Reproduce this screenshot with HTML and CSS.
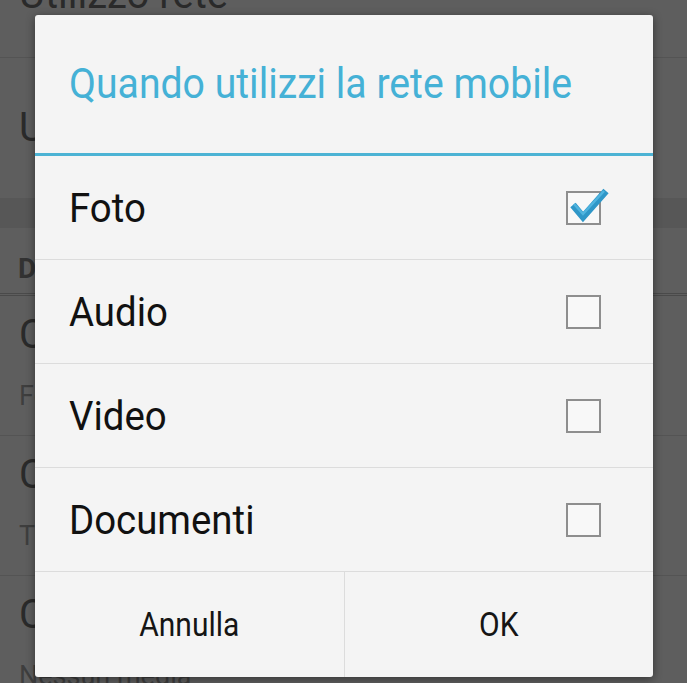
FILE: index.html
```html
<!DOCTYPE html>
<html lang="it">
<head>
<meta charset="utf-8">
<title>Quando utilizzi la rete mobile</title>
<link rel="stylesheet" href="styles.css">
</head>
<body>
<div class="screen">
  <div class="list">
    <div class="pref pref-top"><span class="pref-title">Utilizzo rete</span></div>
    <div class="pref pref-single"><span class="pref-title">Uso dati ridotto</span></div>
    <div class="band"></div>
    <div class="category">DOWNLOAD AUTOMATICO MEDIA</div>
    <div class="pref pref-double">
      <span class="pref-title">Con rete mobile</span>
      <span class="pref-summary">Foto</span>
    </div>
    <div class="pref pref-double">
      <span class="pref-title">Con Wi-Fi</span>
      <span class="pref-summary">Tutti i media</span>
    </div>
    <div class="pref pref-double">
      <span class="pref-title">Con roaming</span>
      <span class="pref-summary">Nessun media</span>
    </div>
  </div>

  <div class="dialog">
    <div class="dialog-title"><span class="tall">Quando utilizzi la rete mobile</span></div>
    <div class="dialog-rule"></div>
    <ul class="options">
      <li class="option"><span class="option-label tall">Foto</span>
        <span class="checkbox checked">
          <svg class="check" width="50" height="44" viewBox="0 0 50 44">
            <polyline points="7,17 17,29 40,3" fill="none" stroke="#2f97c8" stroke-width="7" stroke-linejoin="miter"/>
            <polyline points="8,16 17,26 38,3" fill="none" stroke="#4fb4df" stroke-width="2.5"/>
          </svg>
        </span>
      </li>
      <li class="option"><span class="option-label tall">Audio</span><span class="checkbox"></span></li>
      <li class="option"><span class="option-label tall">Video</span><span class="checkbox"></span></li>
      <li class="option"><span class="option-label tall">Documenti</span><span class="checkbox"></span></li>
    </ul>
    <div class="buttons">
      <div class="btn"><span class="tall">Annulla</span></div>
      <div class="btn"><span class="tall">OK</span></div>
    </div>
  </div>
</div>
</body>
</html>
```

FILE: styles.css
```css
html, body {
  margin: 0;
  padding: 0;
}
body {
  background: #5e5e5e;
  font-family: Roboto, "Noto Sans", "Liberation Sans", sans-serif;
  overflow: hidden;
}
.screen {
  position: relative;
  width: 687px;
  height: 683px;
  overflow: hidden;
  background: #5e5e5e;
}

/* background settings list (dimmed) */
.list {
  display: flex;
  flex-direction: column;
  color: #2a2a2a;
}
.pref {
  box-sizing: border-box;
  padding-left: 19px;
  border-bottom: 1px solid #545454;
  display: flex;
  flex-direction: column;
  justify-content: center;
}
.pref-title {
  font-size: 40px;
  line-height: 1;
  white-space: nowrap;
}
.pref-summary {
  font-size: 27px;
  line-height: 1;
  color: #3e3e3e;
  margin-top: 28px;
  white-space: nowrap;
}
.pref-top {
  height: 58px;
  justify-content: flex-end;
  padding-bottom: 42px;
}
.pref-single {
  height: 140px;
  border-bottom: none;
}
.band {
  height: 30px;
  background: #575757;
}
.category {
  box-sizing: border-box;
  height: 68px;
  padding-left: 18px;
  padding-top: 24px;
  font-size: 28px;
  font-weight: 700;
  color: #323232;
  border-bottom: 3px double #4a4a4a;
  white-space: nowrap;
}
.pref-double {
  height: 140px;
  padding-bottom: 6px;
}

/* dialog */
.dialog {
  position: absolute;
  left: 35px;
  top: 15px;
  width: 618px;
  height: 662px;
  background: #f4f4f4;
  border-radius: 3px;
  box-shadow: 0 2px 10px rgba(0,0,0,0.45);
  display: flex;
  flex-direction: column;
  overflow: hidden;
}
.tall {
  display: inline-block;
  transform: scaleY(1.08);
}
.dialog-title {
  height: 138px;
  display: flex;
  align-items: center;
  padding-left: 34px;
  font-size: 39.2px;
  color: #45b1d6;
  white-space: nowrap;
}
.dialog-rule {
  height: 3px;
  background: #4cb3d4;
}
.options {
  list-style: none;
  margin: 0;
  padding: 0;
}
.option {
  box-sizing: border-box;
  height: 104px;
  display: flex;
  align-items: center;
  justify-content: space-between;
  padding: 0 52px 0 34px;
  border-bottom: 1px solid #dcdcdc;
}
.option-label {
  font-size: 38.4px;
  color: #111;
}
.checkbox {
  position: relative;
  box-sizing: border-box;
  width: 35px;
  height: 34px;
  border: 2px solid #8e8e8e;
  background: #f8f8f8;
}
.check {
  position: absolute;
  left: -2px;
  top: -5px;
}
.buttons {
  flex: 1;
  display: flex;
}
.btn {
  flex: 1;
  display: flex;
  align-items: center;
  justify-content: center;
  font-size: 30px;
  color: #151515;
}
.btn + .btn {
  border-left: 1px solid #dcdcdc;
}
```
